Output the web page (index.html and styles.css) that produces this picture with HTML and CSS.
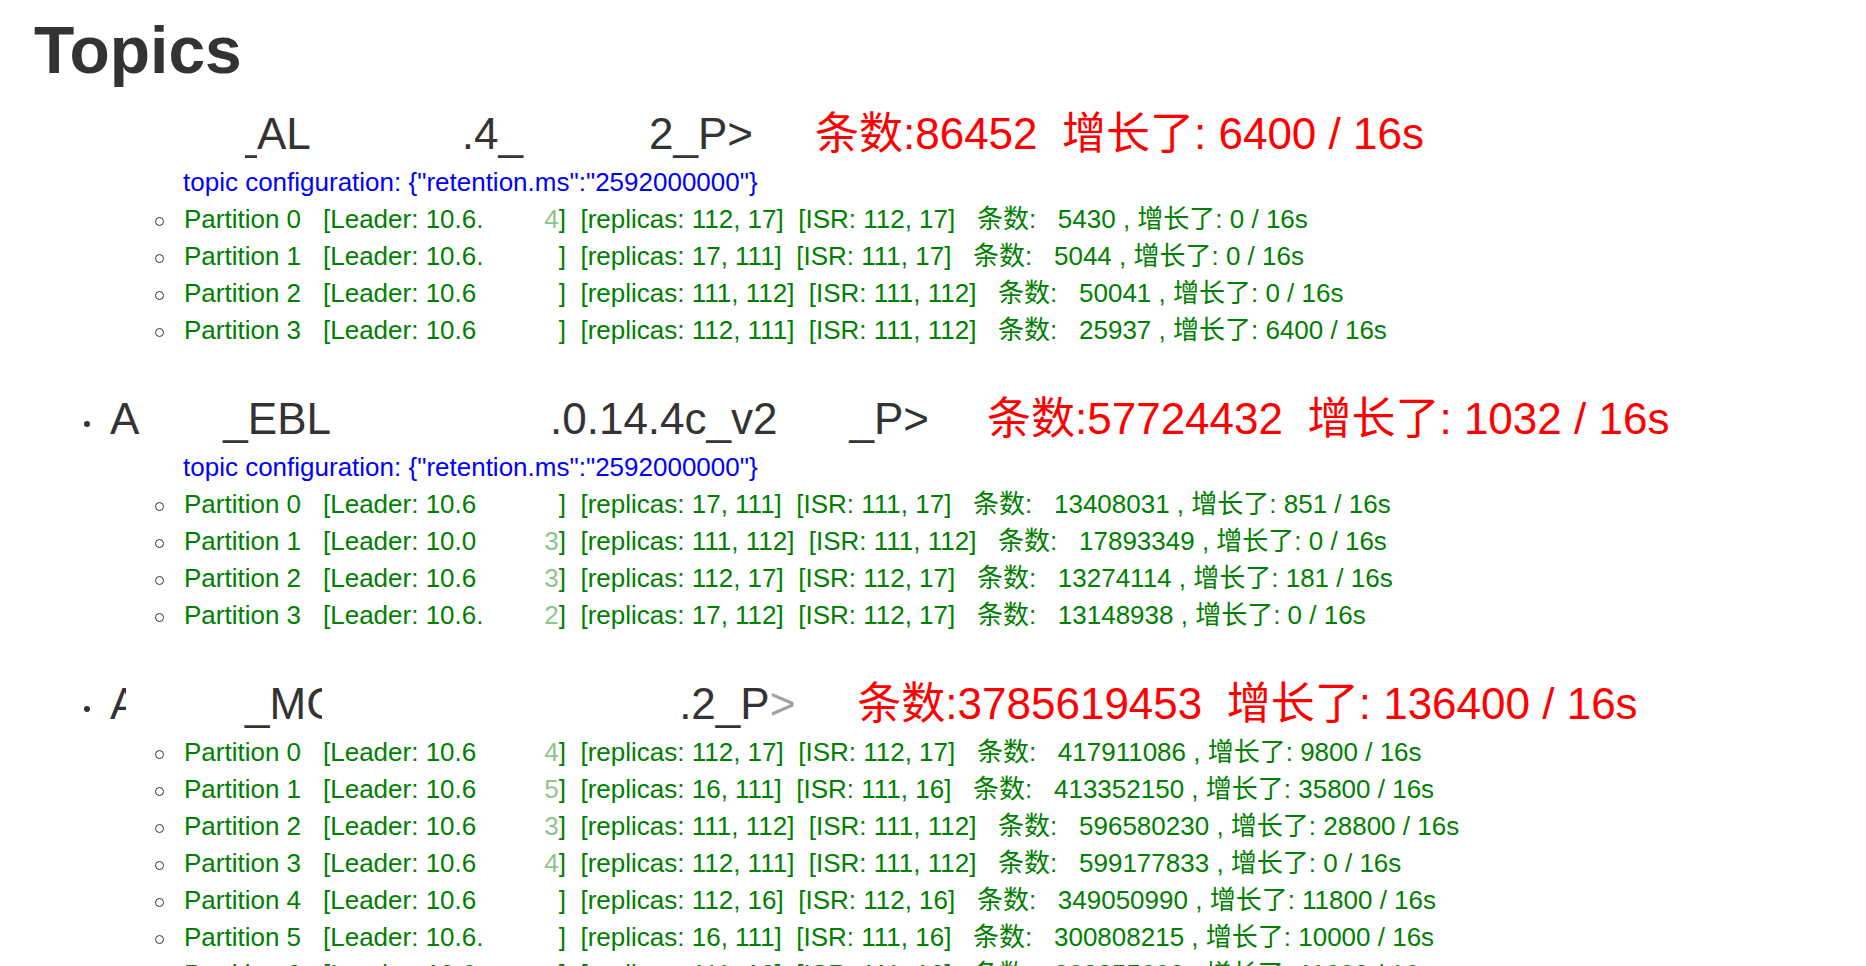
FILE: index.html
```html
<!DOCTYPE html>
<html lang="zh">
<head>
<meta charset="utf-8">
<title>Topics</title>
<link rel="stylesheet" href="styles.css">
</head>
<body>
<h1 class="title">Topics</h1>
<ul class="topics">
  <li class="topic">
    <div class="head nodot"><span class="name"><span class="gap t1a"></span><span class="stub"><span class="stub-in">_</span></span>AL<span class="gap t1b"></span>.4_<span class="gap t1c"></span>2_P&gt;<span class="gap t1d"></span></span><span class="stat">条数:86452&nbsp; 增长了: 6400 / 16s</span></div>
    <div class="config">topic configuration: {"retention.ms":"2592000000"}</div>
    <ul class="parts">
      <li class="part"><span class="pn">Partition 0</span><span class="lead"><span>[Leader: 10.6.</span><span><span class="faint">4</span>]</span></span>&nbsp;&nbsp;[replicas: 112, 17]&nbsp;&nbsp;[ISR: 112, 17]&nbsp;&nbsp;&nbsp;条数:&nbsp;&nbsp;&nbsp;5430 , 增长了: 0 / 16s</li>
      <li class="part"><span class="pn">Partition 1</span><span class="lead"><span>[Leader: 10.6.</span><span>]</span></span>&nbsp;&nbsp;[replicas: 17, 111]&nbsp;&nbsp;[ISR: 111, 17]&nbsp;&nbsp;&nbsp;条数:&nbsp;&nbsp;&nbsp;5044 , 增长了: 0 / 16s</li>
      <li class="part"><span class="pn">Partition 2</span><span class="lead"><span>[Leader: 10.6</span><span>]</span></span>&nbsp;&nbsp;[replicas: 111, 112]&nbsp;&nbsp;[ISR: 111, 112]&nbsp;&nbsp;&nbsp;条数:&nbsp;&nbsp;&nbsp;50041 , 增长了: 0 / 16s</li>
      <li class="part"><span class="pn">Partition 3</span><span class="lead"><span>[Leader: 10.6</span><span>]</span></span>&nbsp;&nbsp;[replicas: 112, 111]&nbsp;&nbsp;[ISR: 111, 112]&nbsp;&nbsp;&nbsp;条数:&nbsp;&nbsp;&nbsp;25937 , 增长了: 6400 / 16s</li>
    </ul>
  </li>
  <li class="topic">
    <div class="head"><span class="name">A<span class="gap t2a"></span>_EBL<span class="gap t2b"></span>.0.14.4c_v2<span class="gap t2c"></span>_P&gt;<span class="gap t2d"></span></span><span class="stat">条数:57724432&nbsp; 增长了: 1032 / 16s</span></div>
    <div class="config">topic configuration: {"retention.ms":"2592000000"}</div>
    <ul class="parts">
      <li class="part"><span class="pn">Partition 0</span><span class="lead"><span>[Leader: 10.6</span><span>]</span></span>&nbsp;&nbsp;[replicas: 17, 111]&nbsp;&nbsp;[ISR: 111, 17]&nbsp;&nbsp;&nbsp;条数:&nbsp;&nbsp;&nbsp;13408031 , 增长了: 851 / 16s</li>
      <li class="part"><span class="pn">Partition 1</span><span class="lead"><span>[Leader: 10.0</span><span><span class="faint">3</span>]</span></span>&nbsp;&nbsp;[replicas: 111, 112]&nbsp;&nbsp;[ISR: 111, 112]&nbsp;&nbsp;&nbsp;条数:&nbsp;&nbsp;&nbsp;17893349 , 增长了: 0 / 16s</li>
      <li class="part"><span class="pn">Partition 2</span><span class="lead"><span>[Leader: 10.6</span><span><span class="faint">3</span>]</span></span>&nbsp;&nbsp;[replicas: 112, 17]&nbsp;&nbsp;[ISR: 112, 17]&nbsp;&nbsp;&nbsp;条数:&nbsp;&nbsp;&nbsp;13274114 , 增长了: 181 / 16s</li>
      <li class="part"><span class="pn">Partition 3</span><span class="lead"><span>[Leader: 10.6.</span><span><span class="faint">2</span>]</span></span>&nbsp;&nbsp;[replicas: 17, 112]&nbsp;&nbsp;[ISR: 112, 17]&nbsp;&nbsp;&nbsp;条数:&nbsp;&nbsp;&nbsp;13148938 , 增长了: 0 / 16s</li>
    </ul>
  </li>
  <li class="topic">
    <div class="head"><span class="name"><span class="clip c16">A</span><span class="gap t3a"></span>_M<span class="clip c16">C</span><span class="gap t3b"></span>.2_P<span class="faint">&gt;</span><span class="gap t3c"></span></span><span class="stat">条数:3785619453&nbsp; 增长了: 136400 / 16s</span></div>
    <ul class="parts">
      <li class="part"><span class="pn">Partition 0</span><span class="lead"><span>[Leader: 10.6</span><span><span class="faint">4</span>]</span></span>&nbsp;&nbsp;[replicas: 112, 17]&nbsp;&nbsp;[ISR: 112, 17]&nbsp;&nbsp;&nbsp;条数:&nbsp;&nbsp;&nbsp;417911086 , 增长了: 9800 / 16s</li>
      <li class="part"><span class="pn">Partition 1</span><span class="lead"><span>[Leader: 10.6</span><span><span class="faint">5</span>]</span></span>&nbsp;&nbsp;[replicas: 16, 111]&nbsp;&nbsp;[ISR: 111, 16]&nbsp;&nbsp;&nbsp;条数:&nbsp;&nbsp;&nbsp;413352150 , 增长了: 35800 / 16s</li>
      <li class="part"><span class="pn">Partition 2</span><span class="lead"><span>[Leader: 10.6</span><span><span class="faint">3</span>]</span></span>&nbsp;&nbsp;[replicas: 111, 112]&nbsp;&nbsp;[ISR: 111, 112]&nbsp;&nbsp;&nbsp;条数:&nbsp;&nbsp;&nbsp;596580230 , 增长了: 28800 / 16s</li>
      <li class="part"><span class="pn">Partition 3</span><span class="lead"><span>[Leader: 10.6</span><span><span class="faint">4</span>]</span></span>&nbsp;&nbsp;[replicas: 112, 111]&nbsp;&nbsp;[ISR: 111, 112]&nbsp;&nbsp;&nbsp;条数:&nbsp;&nbsp;&nbsp;599177833 , 增长了: 0 / 16s</li>
      <li class="part"><span class="pn">Partition 4</span><span class="lead"><span>[Leader: 10.6</span><span>]</span></span>&nbsp;&nbsp;[replicas: 112, 16]&nbsp;&nbsp;[ISR: 112, 16]&nbsp;&nbsp;&nbsp;条数:&nbsp;&nbsp;&nbsp;349050990 , 增长了: 11800 / 16s</li>
      <li class="part"><span class="pn">Partition 5</span><span class="lead"><span>[Leader: 10.6.</span><span>]</span></span>&nbsp;&nbsp;[replicas: 16, 111]&nbsp;&nbsp;[ISR: 111, 16]&nbsp;&nbsp;&nbsp;条数:&nbsp;&nbsp;&nbsp;300808215 , 增长了: 10000 / 16s</li>
      <li class="part"><span class="pn">Partition 6</span><span class="lead"><span>[Leader: 10.6</span><span>]</span></span>&nbsp;&nbsp;[replicas: 111, 16]&nbsp;&nbsp;[ISR: 111, 16]&nbsp;&nbsp;&nbsp;条数:&nbsp;&nbsp;&nbsp;303255690 , 增长了: 11600 / 16s</li>
    </ul>
  </li>
</ul>
</body>
</html>
```

FILE: styles.css
```css
html {
  overflow: hidden;
}

body {
  margin: 0;
  background: #ffffff;
  color: #333333;
  font-family: "Liberation Sans", Arial, "Noto Sans CJK SC", sans-serif;
}

.title {
  margin: 13px 0 0 34px;
  font-size: 66px;
  line-height: 74px;
  font-weight: 700;
}

.topics {
  list-style: none;
  margin: 17px 0 0 84px;
  padding: 0;
}

.topic + .topic {
  margin-top: 40px;
}

.head {
  font-size: 44px;
  line-height: 60px;
  white-space: nowrap;
}

.head::before {
  content: "";
  display: inline-block;
  width: 6px;
  height: 6px;
  border-radius: 50%;
  background: #333333;
  margin-right: 20px;
  vertical-align: 7px;
}

.nodot::before {
  visibility: hidden;
}

.gap {
  display: inline-block;
}

.t1a { width: 135px; }
.t1b { width: 151px; }
.t1c { width: 126px; }
.t1d { width: 62px; }

.t2a { width: 84px; }
.t2b { width: 219px; }
.t2c { width: 72px; }
.t2d { width: 58px; }

.t3a { width: 119px; }
.t3b { width: 357px; }
.t3c { width: 62px; }

.clip {
  display: inline-block;
  overflow: hidden;
  vertical-align: top;
}

.c16 { width: 16px; }

.stub {
  display: inline-block;
  width: 12px;
  overflow: hidden;
  vertical-align: top;
}

.stub-in {
  margin-left: -12px;
}

.stat {
  color: #ff0000;
}

.config {
  color: #0000ff;
  font-size: 26px;
  line-height: 37px;
  padding-left: 99px;
  white-space: nowrap;
}

.parts {
  list-style: none;
  margin: 0;
  padding: 0 0 0 71px;
  font-size: 26px;
  line-height: 37px;
  color: #008000;
  white-space: nowrap;
}

.part::before {
  content: "";
  display: inline-block;
  box-sizing: border-box;
  width: 9px;
  height: 9px;
  border: 1.5px solid #333333;
  border-radius: 50%;
  margin-right: 20px;
  vertical-align: 2px;
}

.pn {
  display: inline-block;
  width: 139px;
}

.lead {
  display: inline-flex;
  justify-content: space-between;
  width: 243px;
}

.faint {
  opacity: 0.45;
}
```
